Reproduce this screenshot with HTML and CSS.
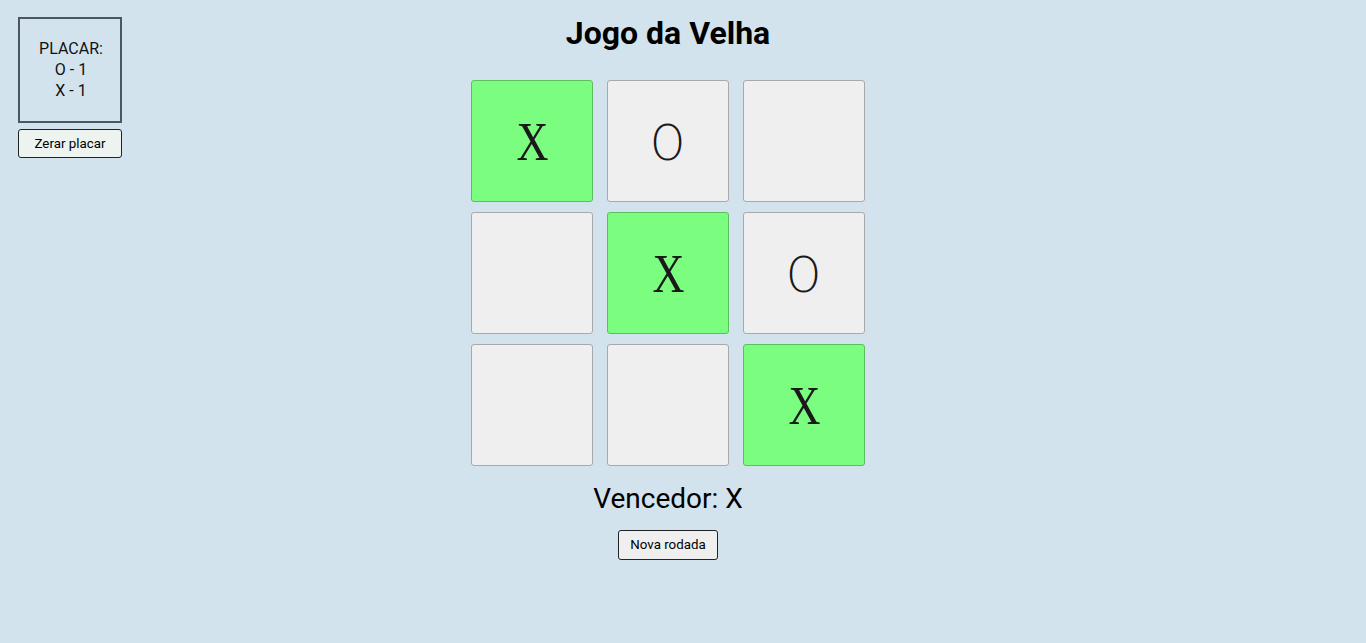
FILE: index.html
```html
<!DOCTYPE html>
<html lang="pt-BR">
<head>
<meta charset="utf-8">
<title>Jogo da Velha</title>
<link rel="stylesheet" href="styles.css">
</head>
<body>
<div class="page">
  <aside class="score">
    <div class="score-box">
      <div>PLACAR:</div>
      <div>O - 1</div>
      <div>X - 1</div>
    </div>
    <button class="btn btn-reset">Zerar placar</button>
  </aside>
  <main class="game">
    <h1 class="title">Jogo da Velha</h1>
    <div class="board">
      <button class="cell win"><span class="mark">X</span></button>
      <button class="cell"><span class="mark mark-o">O</span></button>
      <button class="cell"></button>
      <button class="cell"></button>
      <button class="cell win"><span class="mark">X</span></button>
      <button class="cell"><span class="mark mark-o">O</span></button>
      <button class="cell"></button>
      <button class="cell"></button>
      <button class="cell win"><span class="mark">X</span></button>
    </div>
    <div class="winner">Vencedor: X</div>
    <button class="btn btn-next">Nova rodada</button>
  </main>
</div>
</body>
</html>
```
FILE: styles.css
```css
* { box-sizing: border-box; }
html, body { margin: 0; height: 100%; }
body {
  background: #d3e3ee;
  font-family: Roboto, "Liberation Sans", sans-serif;
  color: #000;
}
.page {
  display: flex;
  align-items: flex-start;
  min-height: 100%;
}
.score {
  width: 104px;
  margin: 17px 0 0 18px;
  display: flex;
  flex-direction: column;
  gap: 6px;
}
.score-box {
  border: 2px solid #4c565f;
  padding: 19px 0 20px 2px;
  text-align: center;
  font-size: 16px;
  line-height: 21px;
  color: #111;
}
.btn {
  font-family: Roboto, "Liberation Sans", sans-serif;
  font-size: 13.33px;
  color: #000;
  border: 1px solid #222;
  border-radius: 3px;
  background: #efefef;
  padding: 0 6px;
  height: 29px;
  cursor: pointer;
}
.btn-reset {
  width: 104px;
  background: #edf3ef;
}
.btn-next {
  width: 100px;
  height: 30px;
  margin-top: 15px;
}
.game {
  flex: 1;
  display: flex;
  flex-direction: column;
  align-items: center;
  padding-right: 152px;
}
.title {
  font-size: 32px;
  font-weight: 700;
  line-height: 37.5px;
  margin: 15px 0 27px;
}
.board {
  display: grid;
  grid-template-columns: repeat(3, 122px);
  grid-auto-rows: 122px;
  column-gap: 14px;
  row-gap: 10px;
}
.cell {
  background: #efefef;
  border: 1px solid #a9a9a9;
  border-radius: 3px;
  padding: 4px 0 0;
  margin: 0;
  display: flex;
  align-items: center;
  justify-content: center;
  font-family: "Liberation Serif", serif;
  font-size: 54px;
  line-height: 1.107;
  color: #1a1a1a;
}
.cell.win {
  background: #7bfd7f;
  border-color: #5cbf5e;
}
.mark {
  display: inline-block;
  transform: scaleX(0.82);
}
.mark-o {
  font-family: "DejaVu Sans", sans-serif;
  font-weight: 200;
  font-size: 50px;
  line-height: 1.16;
  transform: scaleX(0.88);
}
.winner {
  font-size: 28px;
  line-height: 33px;
  margin-top: 16px;
}
```
